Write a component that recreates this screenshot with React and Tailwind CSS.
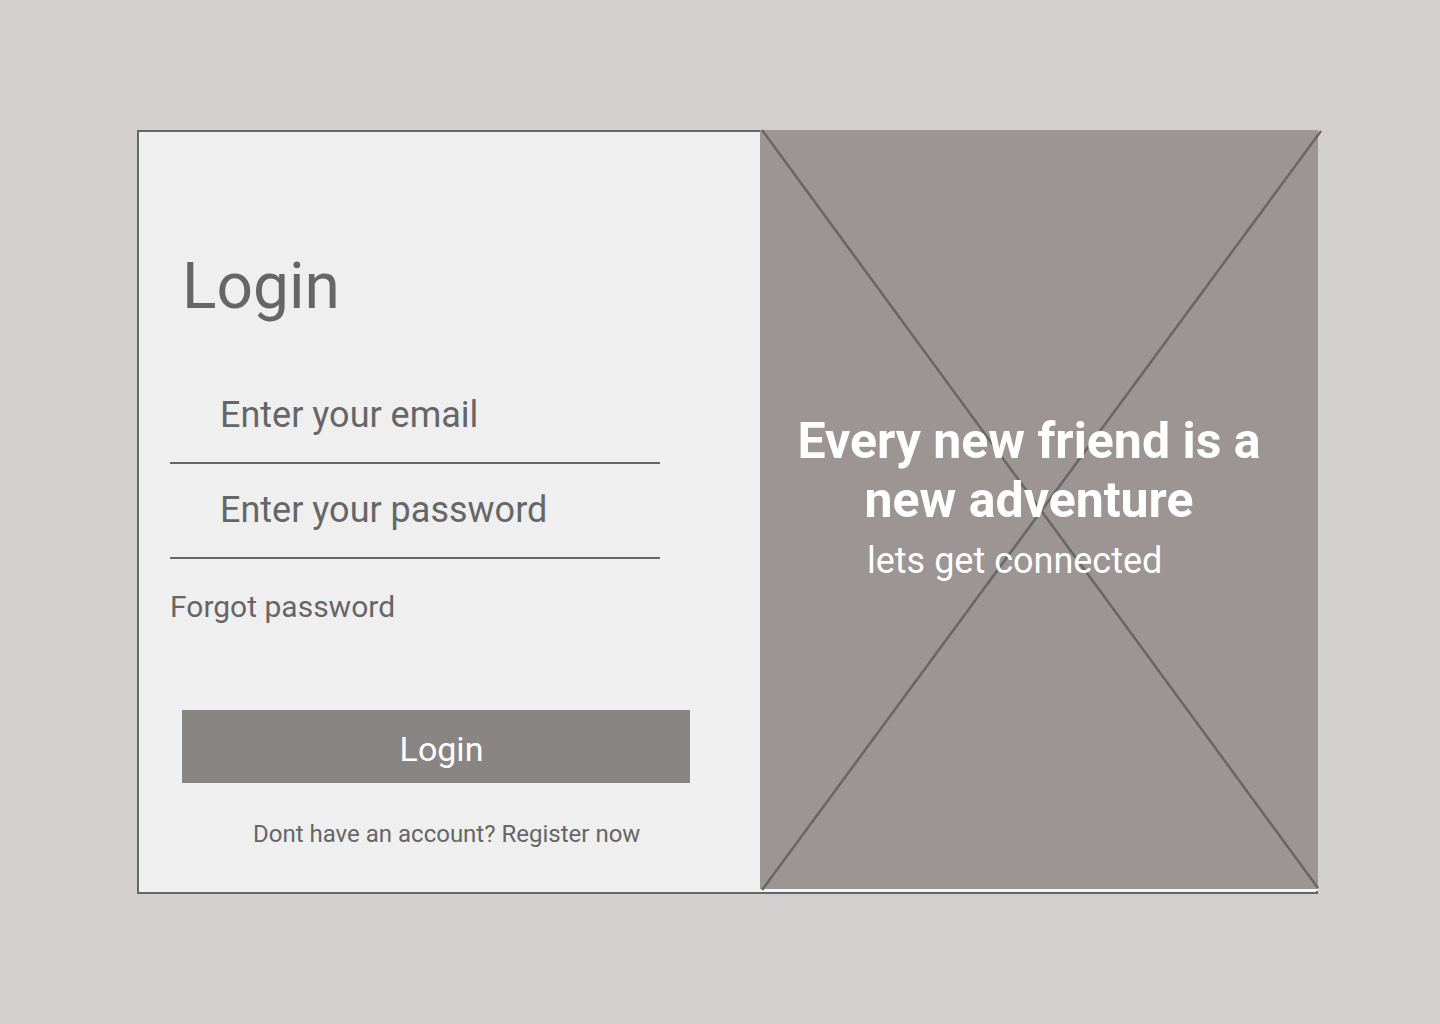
export default function App() {
  return (
    <div className="min-h-[1024px] w-[1440px] bg-[#d3cfce] pt-[130px] pl-[137px] font-['Roboto','Liberation_Sans',sans-serif]">
      <div className="flex w-[1181px] h-[764px] border-2 border-[#666666] bg-[#efefef]">
        <div className="w-[621px] shrink-0 flex flex-col items-start">
          <h1 className="mt-[117px] ml-[43px] text-[64px] leading-[75px] font-normal text-[#666666]">Login</h1>
          <div className="mt-[45px] ml-[31px] w-[490px] pt-[25px] pb-[26px] border-b-2 border-[#666666]">
            <div className="pl-[50px] text-[36px] leading-[42px] text-[#666666]">Enter your email</div>
          </div>
          <div className="ml-[31px] w-[490px] pt-[25px] pb-[26px] border-b-2 border-[#666666]">
            <div className="pl-[50px] text-[36px] leading-[42px] text-[#666666]">Enter your password</div>
          </div>
          <div className="mt-[30px] ml-[31px] text-[30px] leading-[35px] text-[#666666]">Forgot password</div>
          <button className="mt-[86px] ml-[43px] w-[508px] h-[73px] bg-[#898583] flex items-center justify-center pt-[4px] pl-[11px] text-[34px] leading-[40px] text-white">
            Login
          </button>
          <div className="mt-[37px] ml-[114px] text-[24px] leading-[28px] text-[#666666]">Dont have an account? Register now</div>
        </div>
        <div className="relative w-[558px] h-[761px] shrink-0 -mt-[2px] -mr-[2px] border-b-2 border-[#f7f7f7] bg-[#9d9593]">
          <svg className="absolute left-0 top-0 overflow-visible" width="558" height="759" viewBox="0 0 558 759">
            <line x1="2" y1="0" x2="558" y2="758" stroke="#666666" strokeWidth="2.5" />
            <line x1="561" y1="1" x2="2" y2="760" stroke="#666666" strokeWidth="2.5" />
          </svg>
          <div className="relative pt-[282px]">
            <div className="pr-[20px] text-center text-[50px] leading-[59px] font-bold text-white">
              Every new friend is a<br />new adventure
            </div>
            <div className="mt-[10px] pl-[107px] text-[36px] leading-[42px] text-white">lets get connected</div>
          </div>
        </div>
      </div>
    </div>
  );
}
